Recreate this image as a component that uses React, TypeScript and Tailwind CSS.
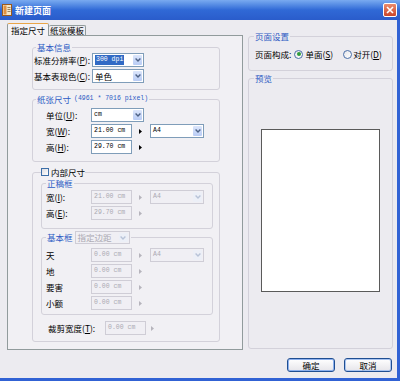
import type { ReactNode } from 'react'

const mono = "font-['Liberation_Mono',monospace] text-[6.5px] leading-none"

function Tri({ disabled }: { disabled?: boolean }) {
  return (
    <svg width="3" height="5" viewBox="0 0 3 5" className="shrink-0">
      <path d="M0 0L3 2.5L0 5Z" fill={disabled ? '#B6B4BC' : '#000'} />
    </svg>
  )
}

function Chevron({ disabled }: { disabled?: boolean }) {
  return (
    <svg width="6" height="4" viewBox="0 0 6 4">
      <path
        d="M0.6 0.6L3 3L5.4 0.6"
        fill="none"
        stroke={disabled ? '#B8C3D8' : '#4D6185'}
        strokeWidth="1.4"
      />
    </svg>
  )
}

function Combo({
  children,
  className,
  disabled,
}: {
  children: ReactNode
  className: string
  disabled?: boolean
}) {
  return (
    <div
      className={`flex h-[14px] shrink-0 items-stretch border p-[1px] ${
        disabled ? 'border-[#CFCDD6] bg-[#F0EFF4] text-[#ABA9B2]' : 'border-[#7F9DB9] bg-white text-black'
      } ${className}`}
    >
      <div className="flex min-w-0 flex-1 items-center pl-[1px]">{children}</div>
      <div
        className={`flex w-[9px] items-center justify-center rounded-[1px] ${
          disabled ? 'bg-[#ECEFF7]' : 'bg-linear-to-b from-[#DCE6FB] to-[#B9CCF5]'
        }`}
      >
        <Chevron disabled={disabled} />
      </div>
    </div>
  )
}

function Field({ value, className, disabled }: { value: string; className: string; disabled?: boolean }) {
  return (
    <div
      className={`flex h-[14px] shrink-0 items-center border pl-[2px] ${
        disabled ? 'border-[#CFCDD6] bg-[#F0EFF4] text-[#ABA9B2]' : 'border-[#7F9DB9] bg-white text-black'
      } ${className}`}
    >
      <span className={mono}>{value}</span>
    </div>
  )
}

function Key({ k }: { k: string }) {
  return (
    <>
      (<span className="underline">{k}</span>)
    </>
  )
}

function SizeRow({
  label,
  value,
  disabled,
  withPaper,
}: {
  label: ReactNode
  value: string
  disabled?: boolean
  withPaper?: boolean
}) {
  return (
    <div className="flex h-[14px] items-center">
      <span className="w-[45px] shrink-0">{label}</span>
      <Field value={value} className="w-[41px]" disabled={disabled} />
      <span className="ml-[7px]">
        <Tri disabled={disabled} />
      </span>
      {withPaper && (
        <Combo className="ml-[8px] w-[54px]" disabled={disabled}>
          <span className={mono}>A4</span>
        </Combo>
      )}
    </div>
  )
}

function Radio({ checked }: { checked?: boolean }) {
  return (
    <span className="flex h-[9px] w-[9px] shrink-0 items-center justify-center rounded-full border border-[#4A6FA8] bg-linear-to-br from-[#E6E6EA] to-white">
      {checked && <span className="h-[4px] w-[4px] rounded-full bg-[#2E9B3A]" />}
    </span>
  )
}

export default function App() {
  return (
    <div className="flex h-[381px] w-[400px] flex-col overflow-hidden whitespace-nowrap bg-[#ECEBF0] font-['Noto_Sans_CJK_SC','Noto_Sans',sans-serif] text-[8.5px] leading-none text-black">
      {/* Title bar */}
      <div className="flex h-[20px] shrink-0 items-center bg-linear-to-b from-[#79AAF0] via-[#3069D6] to-[#2A5CCB] pl-[2px] pr-[3px]">
        <svg width="10" height="12" viewBox="0 0 10 12">
          <rect x="0.5" y="0.5" width="9" height="11" fill="#F4E6C8" stroke="#9A5A1E" />
          <rect x="1.5" y="1.5" width="3" height="9" fill="#E09040" />
          <path d="M5.5 3.5H8.5M5.5 5.5H8.5M5.5 7.5H8.5" stroke="#8A6A40" strokeWidth="0.8" />
        </svg>
        <span className="ml-[3px] text-[9px] font-bold text-white">新建页面</span>
        <div className="ml-auto flex h-[14px] w-[14px] items-center justify-center rounded-[2px] border border-white bg-linear-to-b from-[#EA8A6C] to-[#C9452A]">
          <svg width="8" height="8" viewBox="0 0 8 8">
            <path d="M1 1L7 7M7 1L1 7" stroke="#fff" strokeWidth="1.6" />
          </svg>
        </div>
      </div>

      {/* Body */}
      <div className="flex flex-1 flex-col border-b-[3px] border-r-[3px] border-[#3162D4]">
        <div className="flex">
          {/* Left column: tabs */}
          <div className="ml-[7px] mt-[3px] flex w-[236px] flex-col">
            <div className="flex h-[12px] items-end">
              <div className="relative z-10 -mb-[1px] flex h-[13px] w-[42px] items-center justify-center rounded-t-[2px] border-x border-t border-[#919B9C] border-t-[#E9A548] bg-[#F4F3F7]">
                指定尺寸
              </div>
              <div className="flex h-[10px] w-[37px] items-center justify-center rounded-t-[2px] border-r border-t border-[#919B9C] bg-[#EEEDF2]">
                纸张模板
              </div>
            </div>
            <div className="h-[315px] border border-[#919B9C] bg-[#F1F0F4]">
              {/* 基本信息 */}
              <fieldset className="ml-[24px] mt-[6px] w-[188px] rounded-[3px] border border-[#D3D1DA] pb-[6px] pl-[1px]">
                <legend className="ml-[2px] h-[10px] px-[1px] leading-[10px] text-[#2D5BC4]">基本信息</legend>
                <div className="mt-[1px] flex h-[14px] items-center">
                  <span className="w-[58px] shrink-0">
                    标准分辨率<Key k="P" />:
                  </span>
                  <Combo className="w-[52px]">
                    <span className={`${mono} bg-[#316AC5] px-[1px] py-[2px] text-white`}>300 dpi</span>
                  </Combo>
                </div>
                <div className="mt-[2px] flex h-[14px] items-center">
                  <span className="w-[58px] shrink-0">
                    基本表现色<Key k="C" />:
                  </span>
                  <Combo className="w-[52px]">
                    <span>单色</span>
                  </Combo>
                </div>
              </fieldset>

              {/* 纸张尺寸 */}
              <fieldset className="ml-[24px] mt-[4px] w-[188px] rounded-[3px] border border-[#D3D1DA] pb-[7px] pl-[13px]">
                <legend className="-ml-[10px] flex h-[10px] items-center px-[1px] text-[#2D5BC4]">
                  纸张尺寸<span className={`${mono} ml-[3px]`}>(4961 * 7016 pixel)</span>
                </legend>
                <div className="mt-[4px] flex h-[14px] items-center">
                  <span className="w-[45px] shrink-0">
                    单位<Key k="U" />:
                  </span>
                  <Combo className="w-[53px]">
                    <span className={mono}>cm</span>
                  </Combo>
                </div>
                <div className="mt-[2px]">
                  <SizeRow
                    label={
                      <>
                        宽<Key k="W" />:
                      </>
                    }
                    value="21.00 cm"
                    withPaper
                  />
                </div>
                <div className="mt-[2px]">
                  <SizeRow
                    label={
                      <>
                        高<Key k="H" />:
                      </>
                    }
                    value="29.70 cm"
                  />
                </div>
              </fieldset>

              {/* 内部尺寸 */}
              <fieldset className="ml-[24px] mt-[5px] w-[188px] rounded-[3px] border border-[#D3D1DA] pb-[6px]">
                <legend className="ml-[8px] flex h-[10px] items-center">
                  <span className="h-[8px] w-[8px] border border-[#3C6EA8] bg-linear-to-br from-[#DCDCE2] to-white" />
                  <span className="ml-[2px]">内部尺寸</span>
                </legend>

                <fieldset className="ml-[8px] mt-[1px] w-[172px] rounded-[3px] border border-[#D3D1DA] pb-[8px] pl-[4px]">
                  <legend className="h-[10px] px-[1px] leading-[10px] text-[#2D5BC4]">正稿框</legend>
                  <div className="mt-[2px]">
                    <SizeRow
                      label={
                        <>
                          宽<Key k="I" />:
                        </>
                      }
                      value="21.00 cm"
                      disabled
                      withPaper
                    />
                  </div>
                  <div className="mt-[2px]">
                    <SizeRow
                      label={
                        <>
                          高<Key k="E" />:
                        </>
                      }
                      value="29.70 cm"
                      disabled
                    />
                  </div>
                </fieldset>

                <fieldset className="ml-[8px] mt-[2px] w-[172px] rounded-[3px] border border-[#D3D1DA] pb-[4px] pl-[4px]">
                  <legend className="flex h-[13px] items-center px-[1px]">
                    <span className="text-[#2D5BC4]">基本框</span>
                    <Combo className="ml-[2px] !h-[13px] w-[55px]" disabled>
                      <span>指定边距</span>
                    </Combo>
                  </legend>
                  <div className="mt-[4px]">
                    <SizeRow label="天" value="0.00 cm" disabled withPaper />
                  </div>
                  <div className="mt-[2px]">
                    <SizeRow label="地" value="0.00 cm" disabled />
                  </div>
                  <div className="mt-[2px]">
                    <SizeRow label="要害" value="0.00 cm" disabled />
                  </div>
                  <div className="mt-[2px]">
                    <SizeRow label="小额" value="0.00 cm" disabled />
                  </div>
                </fieldset>

                <div className="ml-[15px] mt-[6px] flex h-[14px] items-center">
                  <span className="w-[57px] shrink-0">
                    裁剪宽度<Key k="T" />:
                  </span>
                  <Field value="0.00 cm" className="w-[41px]" disabled />
                  <span className="ml-[5px]">
                    <Tri disabled />
                  </span>
                </div>
              </fieldset>
            </div>
          </div>

          {/* Right column */}
          <div className="ml-[5px] mt-[11px] w-[145px]">
            <fieldset className="rounded-[3px] border border-[#D3D1DA] pb-[9px] pl-[6px]">
              <legend className="-ml-[1px] h-[10px] px-[1px] leading-[10px] text-[#2D5BC4]">页面设置</legend>
              <div className="mt-[6px] flex h-[14px] items-center">
                <span>页面构成:</span>
                <span className="ml-[3px]">
                  <Radio checked />
                </span>
                <span className="ml-[2px]">
                  单面<Key k="S" />
                </span>
                <span className="ml-[10px]">
                  <Radio />
                </span>
                <span className="ml-[1px]">
                  对开<Key k="D" />
                </span>
              </div>
            </fieldset>
            <fieldset className="mt-[2px] h-[276px] rounded-[3px] border border-[#D3D1DA]">
              <legend className="ml-[5px] h-[10px] px-[1px] leading-[10px] text-[#2D5BC4]">预览</legend>
              <div className="ml-[12px] mt-[46px] h-[163px] w-[119px] border border-[#5A5A5A] bg-white" />
            </fieldset>
          </div>
        </div>

        {/* Buttons */}
        <div className="mt-[8px] flex justify-end gap-[9px] pr-[5px]">
          <button className="flex h-[14px] w-[48px] items-center justify-center rounded-[3px] border border-[#1F4E92] bg-linear-to-b from-white to-[#E6E5EA] shadow-[inset_0_0_0_1px_#8CB0EE]">
            确定
          </button>
          <button className="flex h-[14px] w-[48px] items-center justify-center rounded-[3px] border border-[#1F4E92] bg-linear-to-b from-white to-[#E6E5EA] shadow-[inset_0_0_0_1px_#A9C4F0]">
            取消
          </button>
        </div>
      </div>
    </div>
  )
}
